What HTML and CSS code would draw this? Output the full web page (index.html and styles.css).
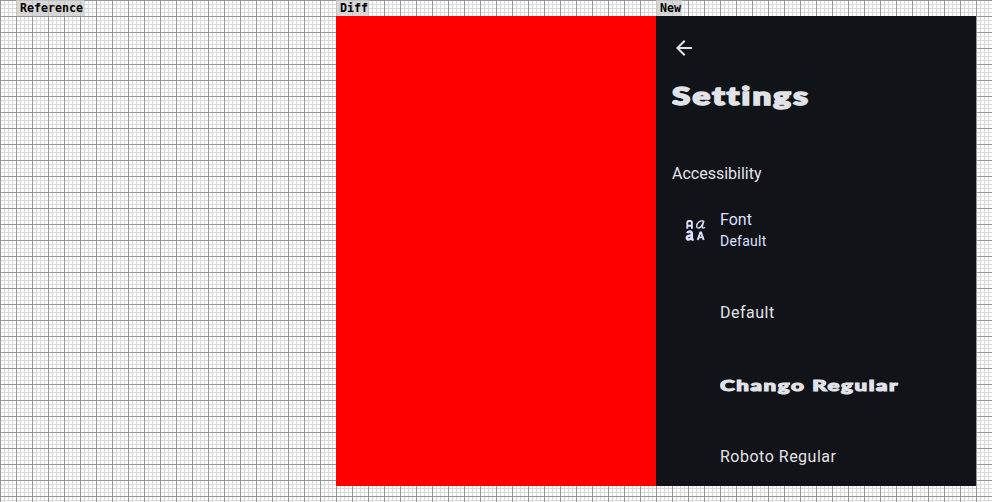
FILE: index.html
```html
<!DOCTYPE html>
<html lang="en">
<head>
<meta charset="utf-8">
<title>Settings comparison</title>
<link rel="stylesheet" href="styles.css">
</head>
<body>
<main class="board">
  <section class="column">
    <h2 class="label">Reference</h2>
    <div class="panel"></div>
  </section>
  <section class="column">
    <h2 class="label">Diff</h2>
    <div class="panel panel-diff"></div>
  </section>
  <section class="column">
    <h2 class="label">New</h2>
    <div class="panel screen">
      <header class="topbar">
        <svg class="back" viewBox="0 0 24 24"><path d="M20 11H7.83l5.59-5.59L12 4l-8 8 8 8 1.41-1.41L7.83 13H20z"/></svg>
        <svg class="title" width="150" height="40"><text x="0" y="28" textLength="138" lengthAdjust="spacingAndGlyphs">Settings</text></svg>
      </header>
      <h3 class="section-title">Accessibility</h3>
      <div class="font-row">
        <svg class="font-icon" viewBox="0 0 20 22">
          <path d="M1.8 9.8V3.8Q1.8 2 3.4 2H4.8Q6.4 2 6.4 3.8V9.8M1.8 6.8H6.4" class="line"/>
          <path d="M18.2 2.2C14.5.8 11.2 4 11.2 7c0 3.2 4.3 2.8 6-2.2l1.2-3-1.5 5.2c-.5 2 .5 2.8 2.6 1.3" class="thin"/>
          <path d="M1.8 14.2c.7-2.5 4.5-2.3 4.5.4v5.1c0 .7.8 1 1.9.7M6 16.2c-3.2.2-4.7 1-4.7 2.7 0 2.3 3.8 2 4.8-.5" class="bold"/>
          <path d="M12.2 21l2.6-7.6h.8l2.6 7.6M13 18.4h4.4" class="line"/>
        </svg>
        <div class="font-text">
          <span class="font-name">Font</span>
          <span class="font-value">Default</span>
        </div>
      </div>
      <ul class="options">
        <li class="option">Default</li>
        <li class="option"><svg class="display" width="190" height="28"><text x="0" y="21" textLength="179" lengthAdjust="spacingAndGlyphs">Chango Regular</text></svg></li>
        <li class="option">Roboto Regular</li>
      </ul>
    </div>
  </section>
</main>
</body>
</html>
```
FILE: styles.css
```css
* { box-sizing: border-box; }
body {
  margin: 0;
  height: 502px;
  overflow: hidden;
  background:
    repeating-linear-gradient(to right, #969696 0 1px, transparent 1px 16px),
    repeating-linear-gradient(to bottom, #969696 0 1px, transparent 1px 16px),
    repeating-linear-gradient(to right, #d9d9d9 0 1px, transparent 1px 4px),
    repeating-linear-gradient(to bottom, #d9d9d9 0 1px, transparent 1px 4px),
    #fff;
  font-family: Roboto, sans-serif;
}
.board { display: flex; padding: 0 16px; }
.column { width: 320px; }
.label {
  width: max-content;
  height: 16px;
  margin: 0;
  padding: 0 1px 0 4px;
  background: rgba(208, 208, 208, .8);
  color: #000;
  font: bold 11.63px/16px "DejaVu Sans Mono", monospace;
}
.panel { height: 470px; }
.panel-diff { background: #f00; }
.screen { background: #121318; color: #e2e2e9; overflow: hidden; }
.topbar {
  display: flex;
  flex-direction: column;
  height: 103px;
  padding: 20px 16px 0;
  background: #101418;
}
.back { width: 24px; height: 24px; fill: #e2e2e9; }
.title { margin-top: 17px; flex: none; }
.title text {
  font: 900 24px Lato, sans-serif;
  letter-spacing: 1.6px;
  fill: #e2e2e9;
  stroke: #e2e2e9;
  stroke-width: 1.6px;
}
.section-title { margin: 43px 16px 0; font-size: 16px; font-weight: 400; line-height: 24px; }
.font-row { display: flex; height: 64px; margin-top: 13px; color: #dae2ff; padding: 9px 0 0 29px; }
.font-icon { width: 21px; height: 22px; margin: 11px 14px 0 0; fill: none; stroke: #dae2ff; }
.line { stroke-width: 1.9; }
.thin { stroke-width: 1.4; }
.bold { stroke-width: 2.5; }
.font-text { display: flex; flex-direction: column; }
.font-name { font-size: 16px; line-height: 24px; }
.font-value { font-size: 14px; line-height: 18px; letter-spacing: .25px; }
.options { margin: 13px 0 0; padding: 0 0 0 64px; list-style: none; }
.option { display: flex; align-items: center; height: 72px; font-size: 16px; letter-spacing: .5px; }
.display text {
  font: 900 15.5px Lato, sans-serif;
  letter-spacing: 1.1px;
  fill: #e2e2e9;
  stroke: #e2e2e9;
  stroke-width: 1.1px;
}
```
